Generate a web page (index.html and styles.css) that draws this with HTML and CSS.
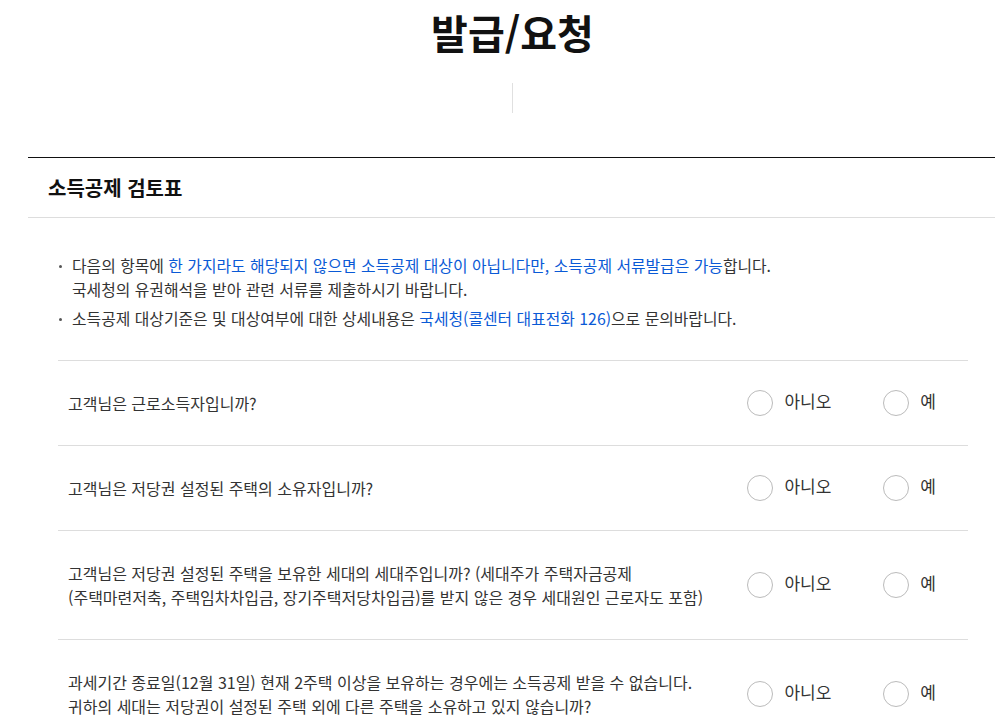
FILE: index.html
```html
<!DOCTYPE html>
<html lang="ko">
<head>
<meta charset="utf-8">
<title>발급/요청</title>
<link rel="stylesheet" href="styles.css">
</head>
<body>
<div class="page">
  <h1 class="title">발급/요청</h1>
  <div class="tabs"><span class="tab-divider"></span></div>
  <section class="section">
    <h2 class="section-head">소득공제 검토표</h2>
    <div class="body">
      <ul class="notice">
        <li><span class="dot"></span><span class="txt">다음의 항목에 <em>한 가지라도 해당되지 않으면 소득공제 대상이 아닙니다만, 소득공제 서류발급은 가능</em>합니다.<br>국세청의 유권해석을 받아 관련 서류를 제출하시기 바랍니다.</span></li>
        <li><span class="dot"></span><span class="txt">소득공제 대상기준은 및 대상여부에 대한 상세내용은 <em>국세청(콜센터 대표전화 126)</em>으로 문의바랍니다.</span></li>
      </ul>
      <div class="rows">
        <div class="row">
          <p class="q">고객님은 근로소득자입니까?</p>
          <div class="opts">
            <label class="opt"><span class="radio"></span><span class="lbl">아니오</span></label>
            <label class="opt"><span class="radio"></span><span class="lbl">예</span></label>
          </div>
        </div>
        <div class="row">
          <p class="q">고객님은 저당권 설정된 주택의 소유자입니까?</p>
          <div class="opts">
            <label class="opt"><span class="radio"></span><span class="lbl">아니오</span></label>
            <label class="opt"><span class="radio"></span><span class="lbl">예</span></label>
          </div>
        </div>
        <div class="row">
          <p class="q">고객님은 저당권 설정된 주택을 보유한 세대의 세대주입니까? (세대주가 주택자금공제<br>(주택마련저축, 주택임차차입금, 장기주택저당차입금)를 받지 않은 경우 세대원인 근로자도 포함)</p>
          <div class="opts">
            <label class="opt"><span class="radio"></span><span class="lbl">아니오</span></label>
            <label class="opt"><span class="radio"></span><span class="lbl">예</span></label>
          </div>
        </div>
        <div class="row">
          <p class="q">과세기간 종료일(12월 31일) 현재 2주택 이상을 보유하는 경우에는 소득공제 받을 수 없습니다.<br>귀하의 세대는 저당권이 설정된 주택 외에 다른 주택을 소유하고 있지 않습니까?</p>
          <div class="opts">
            <label class="opt"><span class="radio"></span><span class="lbl">아니오</span></label>
            <label class="opt"><span class="radio"></span><span class="lbl">예</span></label>
          </div>
        </div>
      </div>
    </div>
  </section>
</div>
</body>
</html>
```
FILE: styles.css
```css
html, body {
  margin: 0;
  padding: 0;
  overflow: hidden;
  background: #fff;
}
body {
  font-family: "Noto Sans CJK KR", "Noto Sans", sans-serif;
  color: #333;
}
.page {
  margin-left: 28px;
  width: 969px;
}
.title {
  margin: 0;
  padding-top: 9px;
  font-size: 40px;
  line-height: 46px;
  font-weight: 700;
  color: #111;
  text-align: center;
}
.tabs {
  margin-top: 28px;
  margin-bottom: 44px;
  height: 30px;
  display: flex;
  justify-content: center;
}
.tab-divider {
  width: 1px;
  height: 30px;
  background: #e0e0e0;
}
.section {
  border-top: 1px solid #111;
}
.section-head {
  margin: 0;
  padding: 0 20px;
  height: 59px;
  line-height: 59px;
  font-size: 20px;
  font-weight: 700;
  color: #111;
  border-bottom: 1px solid #ddd;
}
.body {
  padding: 0 29px 0 30px;
}
.notice {
  list-style: none;
  margin: 0;
  padding: 36px 0 29px 0;
  font-size: 15.85px;
  line-height: 24px;
  color: #333;
}
.notice li {
  display: flex;
  align-items: flex-start;
}
.notice li + li {
  margin-top: 5px;
}
.dot {
  flex: none;
  width: 3px;
  height: 3px;
  margin: 11px 10px 0 1px;
  border-radius: 50%;
  background: #555;
}
.notice em {
  font-style: normal;
  color: #0a5ad6;
}
.row {
  display: flex;
  align-items: center;
  border-top: 1px solid #ddd;
  padding: 30px 32px 30px 10px;
}
.q {
  flex: 1;
  margin: 0;
  font-size: 16px;
  line-height: 24px;
  color: #333;
}
.opts {
  display: flex;
  align-items: center;
  height: 24px;
}
.opt {
  display: flex;
  align-items: center;
  height: 24px;
}
.opt + .opt {
  margin-left: 52px;
}
.radio {
  flex: none;
  width: 24px;
  height: 24px;
  border: 1px solid #bbb;
  border-radius: 50%;
  margin-top: -1px;
}
.lbl {
  margin-left: 11px;
  font-size: 17px;
  line-height: 24px;
  color: #333;
  margin-top: -4px;
}
```
